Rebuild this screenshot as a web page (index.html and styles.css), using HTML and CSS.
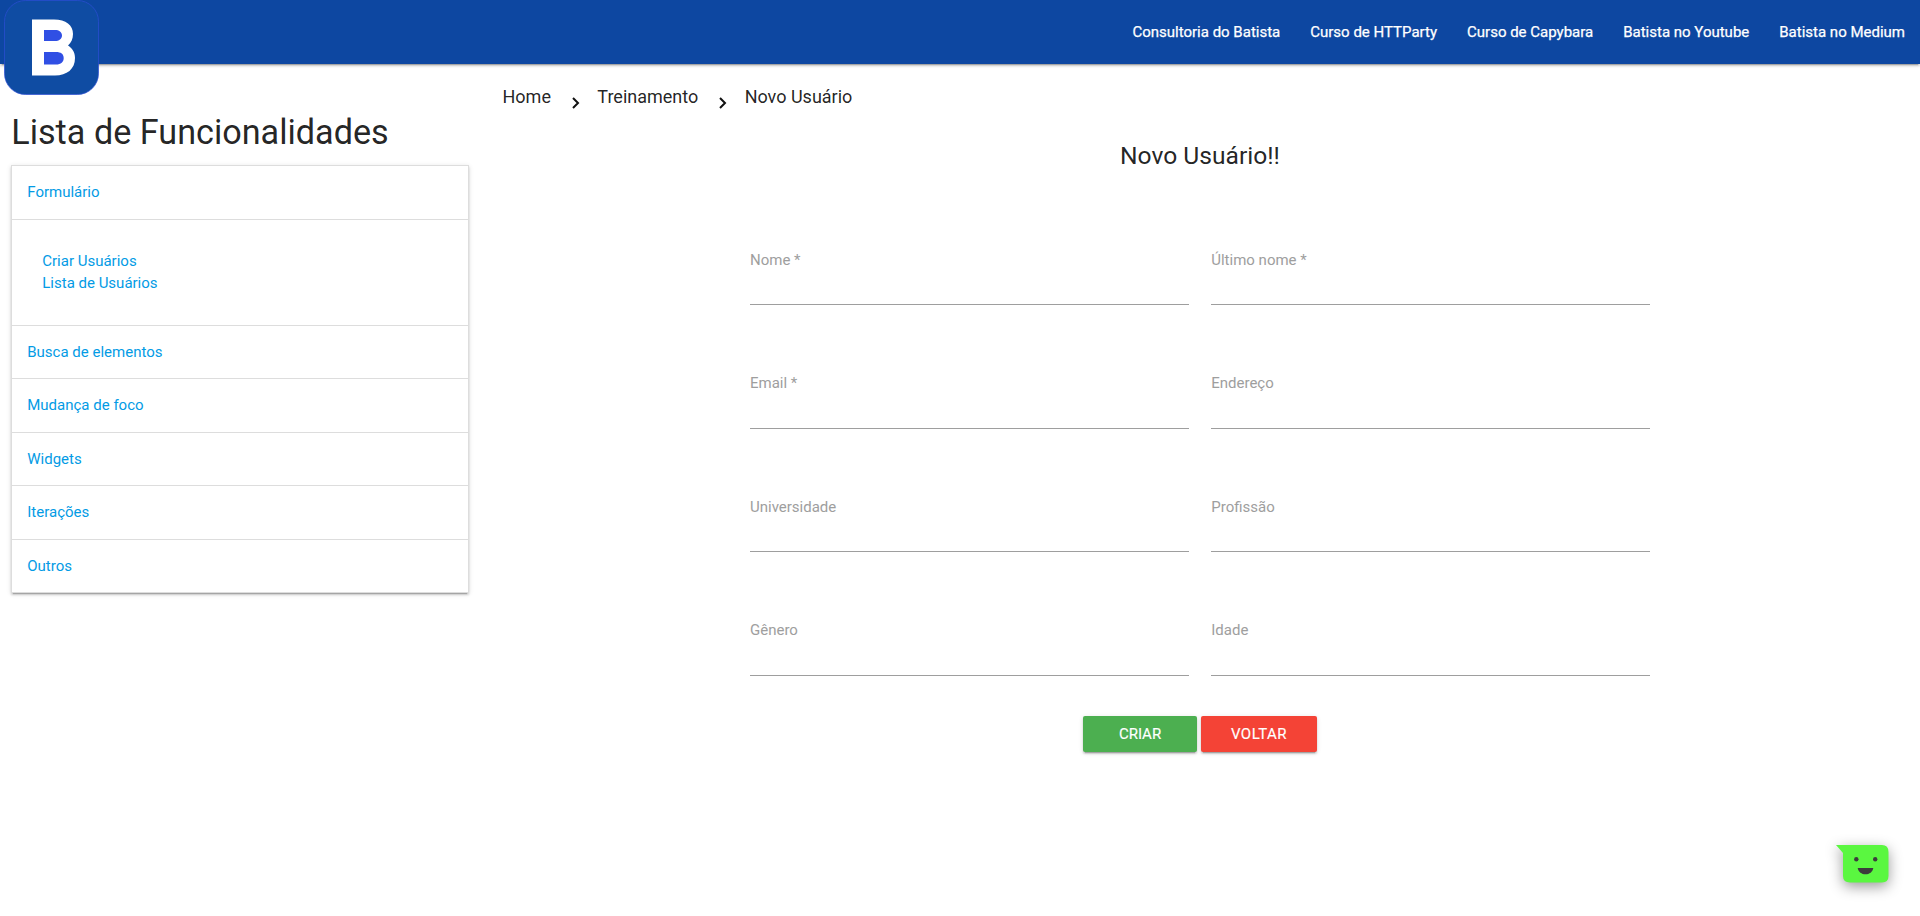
FILE: index.html
```html
<!DOCTYPE html>
<html lang="pt-BR">
<head>
<meta charset="utf-8">
<title>Novo Usuário</title>
<link rel="stylesheet" href="styles.css">
</head>
<body>
<nav class="navbar">
  <a class="brand" href="#" aria-label="Batista">
    <svg width="96" height="96" viewBox="0 0 96 96">
      <rect x="0.5" y="0.5" width="94" height="94" rx="21" fill="#0f4ca3" stroke="#2c4dd6" stroke-width="0.7"/>
      <path fill="#fff" fill-rule="evenodd" d="M28 19.500H50C62 19.500 69 25 69 34C69 39 67 43 64 45.500C68 48 71 52 71 58C71 69 63 75.500 51 75.500H28Z"/>
      <path fill="#304fe4" d="M40 30H51C55 30 58 32 58 35.500S55 41 51 41H40ZM40 52H52C57 52 59.700 54 59.700 58S57 64.500 52 64.500H40Z"/>
    </svg>
  </a>
  <div class="links">
    <a href="#">Consultoria do Batista</a>
    <a href="#">Curso de HTTParty</a>
    <a href="#">Curso de Capybara</a>
    <a href="#">Batista no Youtube</a>
    <a href="#">Batista no Medium</a>
  </div>
</nav>
<div class="page">
  <aside class="sidebar">
    <h4>Lista de Funcionalidades</h4>
    <ul class="menu">
      <li><a href="#">Formulário</a></li>
      <li class="submenu"><a href="#">Criar Usuários</a><a href="#">Lista de Usuários</a></li>
      <li><a href="#">Busca de elementos</a></li>
      <li><a href="#">Mudança de foco</a></li>
      <li><a href="#">Widgets</a></li>
      <li><a href="#">Iterações</a></li>
      <li><a href="#">Outros</a></li>
    </ul>
  </aside>
  <main class="content">
    <div class="crumbs">
      <a href="#">Home</a>
      <svg class="chevron" width="8" height="12" viewBox="0 0 8 12"><path d="M1 1L6 6L1 11" fill="none" stroke="#111" stroke-width="2"/></svg>
      <a href="#">Treinamento</a>
      <svg class="chevron" width="8" height="12" viewBox="0 0 8 12"><path d="M1 1L6 6L1 11" fill="none" stroke="#111" stroke-width="2"/></svg>
      <a href="#">Novo Usuário</a>
    </div>
    <h5>Novo Usuário!!</h5>
    <form class="form">
      <label class="field">Nome *</label>
      <label class="field">Último nome *</label>
      <label class="field">Email *</label>
      <label class="field">Endereço</label>
      <label class="field">Universidade</label>
      <label class="field">Profissão</label>
      <label class="field">Gênero</label>
      <label class="field">Idade</label>
    </form>
    <div class="actions">
      <button class="btn create" type="button">CRIAR</button>
      <button class="btn back" type="button">VOLTAR</button>
    </div>
  </main>
</div>
<svg class="chat" width="54" height="40" viewBox="0 0 54 40">
  <path fill="#5af740" d="M0 0H46Q52.500 0 52.500 7V31Q52.500 37.500 46 37.500H14Q7 37.500 7 31V8Z"/>
  <circle cx="20.300" cy="14.300" r="2.200" fill="#3c3c3c"/>
  <circle cx="39.200" cy="14.300" r="2.200" fill="#3c3c3c"/>
  <path fill="#3c3c3c" d="M21.700 23H37.300C36.500 27 33.500 29.300 29.500 29.300S22.500 27 21.700 23Z"/>
</svg>
</body>
</html>
```
FILE: styles.css
```css
* { box-sizing: border-box; }

body {
  margin: 0;
  height: 916px;
  overflow: hidden;
  background: #fff;
  color: rgba(0, 0, 0, 0.87);
  font: 15px/22.5px Roboto, sans-serif;
}

a { text-decoration: none; color: #039be5; }
h4, h5 { margin: 0; font-weight: 400; }

.navbar {
  position: relative;
  display: flex;
  justify-content: flex-end;
  height: 64px;
  background: #0d47a1;
  box-shadow: 0 2px 2px 0 rgba(0, 0, 0, 0.14), 0 1px 5px 0 rgba(0, 0, 0, 0.12), 0 3px 1px -2px rgba(0, 0, 0, 0.2);
}
.brand { position: absolute; left: 4px; top: 0; }
.brand svg { display: block; }
.links { display: flex; }
.links a {
  padding: 0 15px;
  line-height: 64px;
  color: #fff;
  -webkit-text-stroke: 0.25px #fff;
}

.page { display: flex; }
.sidebar { width: 480px; padding: 0 11.25px; }
.sidebar h4 { margin-top: 50px; font-size: 34.2px; line-height: 37.6px; }
.menu {
  margin: 13.65px 0 0;
  padding: 0;
  list-style: none;
  border: 1px solid #ddd;
  border-bottom: 0;
  box-shadow: 0 2px 2px 0 rgba(0, 0, 0, 0.14), 0 1px 5px 0 rgba(0, 0, 0, 0.12), 0 3px 1px -2px rgba(0, 0, 0, 0.2);
}
.menu li { padding: 15px; border-bottom: 1px solid #ddd; }
.menu a { display: block; }
.menu .submenu { padding: 30px; }

.content { width: 1440px; }
.crumbs {
  display: flex;
  height: 64px;
  padding-left: 22.5px;
}
.crumbs a { font-size: 18px; line-height: 66px; color: rgba(0, 0, 0, 0.87); }
.chevron { margin: 33px 17.6px 0 20.8px; }
.content h5 { margin-top: 14px; text-align: center; font-size: 24.6px; line-height: 27px; }

.form {
  display: grid;
  grid-template-columns: 438.75px 438.75px;
  column-gap: 22.5px;
  row-gap: 62.5px;
  margin: 75.4px 0 0 270px;
}
.field {
  height: 61px;
  padding-top: 4.2px;
  border-bottom: 1px solid #9e9e9e;
  color: #9e9e9e;
}
.actions { display: flex; justify-content: center; gap: 4px; margin-top: 40.1px; }
.btn {
  height: 36px;
  padding: 0;
  border: 0;
  border-radius: 2px;
  color: #fff;
  font: 400 15px/36px Roboto, sans-serif;
  -webkit-text-stroke: 0.15px #fff;
  box-shadow: 0 2px 2px 0 rgba(0, 0, 0, 0.14), 0 1px 5px 0 rgba(0, 0, 0, 0.12), 0 3px 1px -2px rgba(0, 0, 0, 0.2);
}
.create { width: 114px; background: #4caf50; }
.back { width: 116px; background: #f44336; letter-spacing: 0.5px; }

.chat {
  position: absolute;
  left: 1836px;
  top: 845px;
  overflow: visible;
  filter: drop-shadow(0 4px 7px rgba(0, 0, 0, 0.4));
}
```
